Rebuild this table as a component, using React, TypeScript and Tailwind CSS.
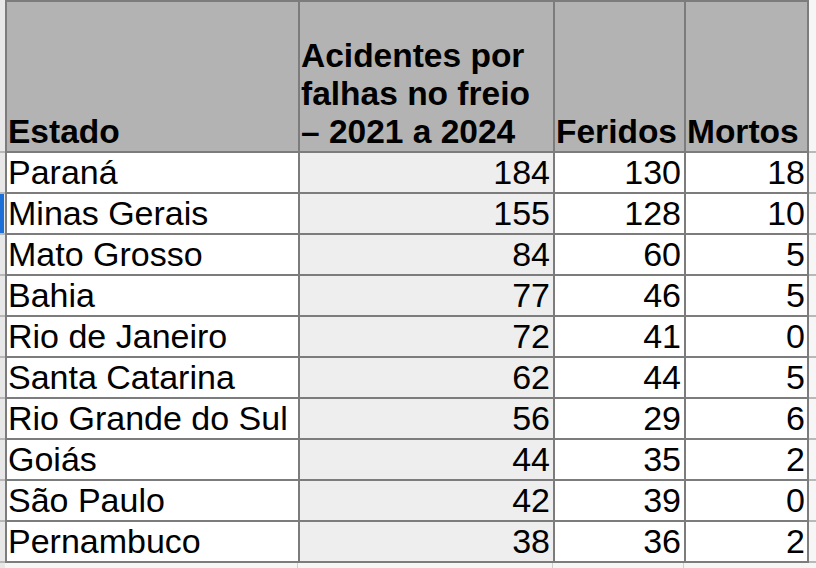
const rows: [string, number, number, number][] = [
  ["Paraná", 184, 130, 18],
  ["Minas Gerais", 155, 128, 10],
  ["Mato Grosso", 84, 60, 5],
  ["Bahia", 77, 46, 5],
  ["Rio de Janeiro", 72, 41, 0],
  ["Santa Catarina", 62, 44, 5],
  ["Rio Grande do Sul", 56, 29, 6],
  ["Goiás", 44, 35, 2],
  ["São Paulo", 42, 39, 0],
  ["Pernambuco", 38, 36, 2],
]

const SideStrip = ({ marker }: { marker?: boolean }) => (
  <div className="flex flex-col">
    <div className="h-[151px]" />
    {rows.map((r, i) => (
      <div key={r[0]} className="h-[41px] border-t-2 border-[#b8b8b8]">
        {marker && i === 1 && <div className="h-full w-[4px] bg-[#1c6fd6]" />}
      </div>
    ))}
    <div className="border-t-2 border-[#b8b8b8]" />
  </div>
)

const App = () => {
  return (
    <div className="flex h-[568px] w-[816px] overflow-hidden bg-[#f6f6f6] font-['Liberation_Sans',Arial,sans-serif] text-black">
      {/** Row header strip */}
      <div className="w-[5px] bg-[#e8e8e8]">
        <SideStrip marker />
      </div>

      <div className="flex flex-col">
        <div className="grid w-fit grid-cols-[291px_253px_129px_121px] grid-rows-[149px_repeat(10,39px)] gap-[2px] bg-[#7c7c7c] p-[2px] text-[34px] leading-[normal]">
          <div className="flex items-end bg-[#b3b3b3] pl-[1px] text-[33.5px] font-bold">Estado</div>
          <div className="flex items-end bg-[#b3b3b3] pl-[1px] text-[33.5px] font-bold">
            <span>
              Acidentes por
              <br />
              falhas no freio
              <br />– 2021 a 2024
            </span>
          </div>
          <div className="flex items-end bg-[#b3b3b3] pl-[1px] text-[33.5px] font-bold">Feridos</div>
          <div className="flex items-end bg-[#b3b3b3] pl-[1px] text-[33.5px] font-bold">Mortos</div>

          {rows.map(([estado, acidentes, feridos, mortos]) => (
            <div key={estado} className="contents">
              <div className="flex items-end bg-white pl-[1px]">{estado}</div>
              <div className="flex items-end justify-end bg-[#eeeeee] pr-[3px]">{acidentes}</div>
              <div className="flex items-end justify-end bg-white pr-[3px]">{feridos}</div>
              <div className="flex items-end justify-end bg-white pr-[2px]">{mortos}</div>
            </div>
          ))}
        </div>
        {/** Empty cells below */}
        <div className="flex flex-1">
          <div className="w-[293px] border-r border-[#cfcfcf]" />
          <div className="w-[255px] border-r border-[#cfcfcf]" />
          <div className="w-[131px] border-r border-[#cfcfcf]" />
        </div>
      </div>

      <div className="flex-1">
        <SideStrip />
      </div>
    </div>
  )
}

export default App
